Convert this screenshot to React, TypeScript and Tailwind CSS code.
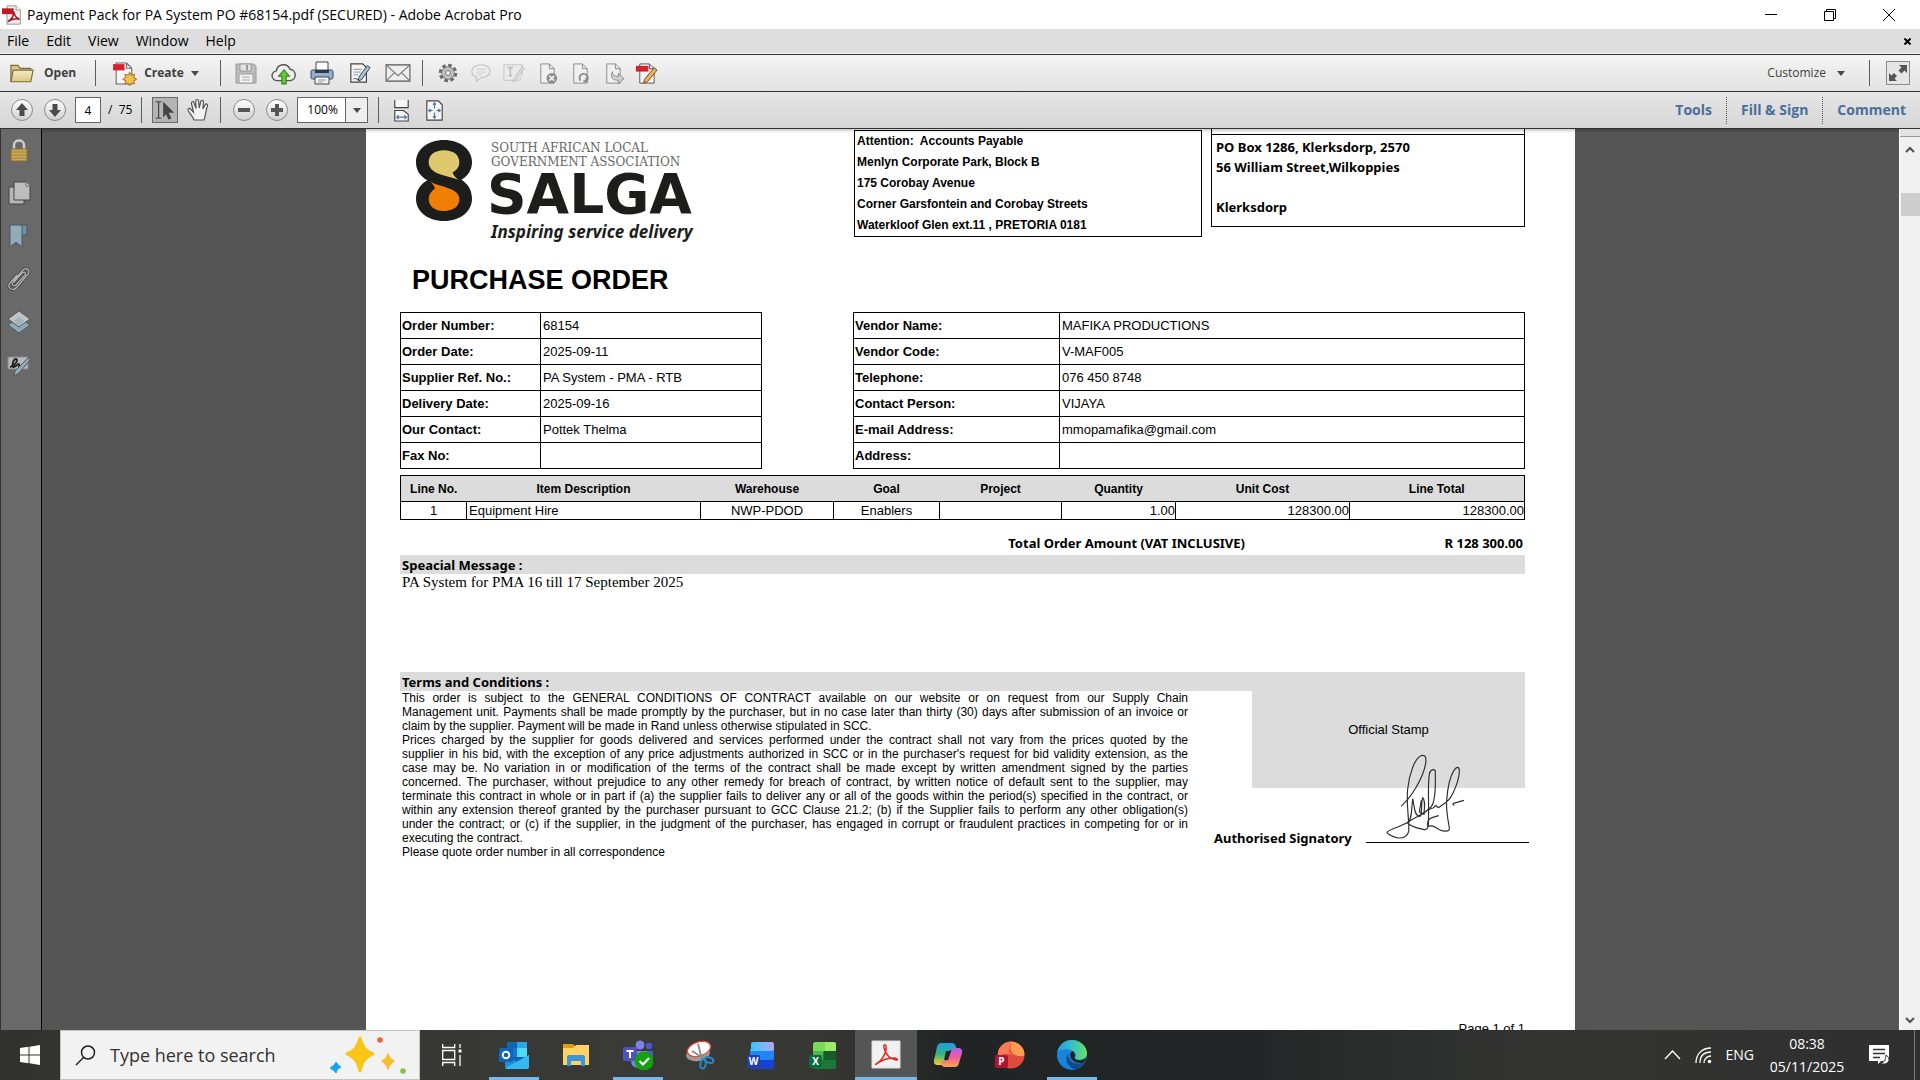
import type { ReactNode } from "react";

const orderRows = [
  ["Order Number:", "68154"],
  ["Order Date:", "2025-09-11"],
  ["Supplier Ref. No.:", "PA System - PMA - RTB"],
  ["Delivery Date:", "2025-09-16"],
  ["Our Contact:", "Pottek Thelma"],
  ["Fax No:", ""],
];

const vendorRows = [
  ["Vendor Name:", "MAFIKA PRODUCTIONS"],
  ["Vendor Code:", "V-MAF005"],
  ["Telephone:", "076 450 8748"],
  ["Contact Person:", "VIJAYA"],
  ["E-mail Address:", "mmopamafika@gmail.com"],
  ["Address:", ""],
];

const terms = [
  [
    "This order is subject to the GENERAL CONDITIONS OF CONTRACT available on our website or on request from our Supply Chain",
    "Management unit. Payments shall be made promptly by the purchaser, but in no case later than thirty (30) days after submission of an invoice or",
    "claim by the supplier. Payment will be made in Rand unless otherwise stipulated in SCC.",
  ],
  [
    "Prices charged by the supplier for goods delivered and services performed under the contract shall not vary from the prices quoted by the",
    "supplier in his bid, with the exception of any price adjustments authorized in SCC or in the purchaser's request for bid validity extension, as the",
    "case may be. No variation in or modification of the terms of the contract shall be made except by written amendment signed by the parties",
    "concerned. The purchaser, without prejudice to any other remedy for breach of contract, by written notice of default sent to the supplier, may",
    "terminate this contract in whole or in part if (a) the supplier fails to deliver any or all of the goods within the period(s) specified in the contract, or",
    "within any extension thereof granted by the purchaser pursuant to GCC Clause 21.2; (b) if the Supplier fails to perform any other obligation(s)",
    "under the contract; or (c) if the supplier, in the judgment of the purchaser, has engaged in corrupt or fraudulent practices in competing for or in",
    "executing the contract.",
  ],
  ["Please quote order number in all correspondence"],
];

const page = "M5 2h9l5 5v15H5z";

function Icon({ children, size = 24, label }: { children: ReactNode; size?: number; label?: string }) {
  return (
    <svg width={size} height={size} viewBox="0 0 24 24" fill="none" aria-label={label} className="shrink-0">
      {children}
    </svg>
  );
}

function ToolButton({ label, wide, children }: { label: string; wide?: boolean; children: ReactNode }) {
  return (
    <button
      aria-label={label}
      className={`flex h-8 shrink-0 items-center justify-center ${wide ? "w-[38px]" : "w-[33px]"}`}
    >
      {children}
    </button>
  );
}

function Divider() {
  return <div className="h-[26px] w-px shrink-0 bg-[#5c5c5c]" />;
}

function DownArrow() {
  return (
    <svg width="8" height="5" viewBox="0 0 8 5" className="shrink-0">
      <path d="M0 0h8L4 5z" fill="#4a4a4a" />
    </svg>
  );
}

function RoundArrow({ children }: { children: ReactNode }) {
  return (
    <Icon>
      <circle cx="12" cy="12" r="10.5" fill="url(#round)" stroke="#8b8b8b" />
      {children}
    </Icon>
  );
}

function TitleBar() {
  return (
    <header className="flex h-[29px] shrink-0 items-center bg-white pl-[2px] text-sm text-black">
      <Icon size={20}>
        <path d="M6 1h11l5 5v17H6z" fill="#eee" stroke="#888" />
        <path d="M17 1v5h5" fill="#fff" stroke="#888" />
        <path d="M0 4h14v7H0z" fill="#c11a24" />
        <path d="M7 20c5-3 7-7 7-12 1 5 3 8 7 9-5-1-10 0-14 3z" stroke="#a3131c" strokeWidth="1.8" />
      </Icon>
      <h1 className="ml-[5px]">Payment Pack for PA System PO #68154.pdf (SECURED) - Adobe Acrobat Pro</h1>
      <div className="ml-auto flex h-full">
        <button aria-label="Minimize" className="flex w-[59px] items-center justify-center">
          <svg width="12" height="12"><path d="M0 5.5h12" stroke="#000" /></svg>
        </button>
        <button aria-label="Restore" className="flex w-[59px] items-center justify-center">
          <svg width="12" height="12" fill="none" stroke="#000"><path d="M.5 2.5h9v9h-9zM2.5 2.500V.5h9v9h-2" /></svg>
        </button>
        <button aria-label="Close" className="flex w-[59px] items-center justify-center">
          <svg width="12" height="12" stroke="#000"><path d="M0 0l12 12M12 0L0 12" /></svg>
        </button>
        <span className="w-[2px]" />
      </div>
    </header>
  );
}

function MenuBar() {
  return (
    <nav className="flex h-[25px] shrink-0 items-center gap-[17px] border-b border-[#f5f5f5] bg-[#dedede] pl-[7px] text-sm text-black">
      <button>File</button>
      <button>Edit</button>
      <button>View</button>
      <button>Window</button>
      <button>Help</button>
      <button aria-label="Close document" className="mr-[9px] ml-auto">
        <svg width="7" height="7" stroke="#000" strokeWidth="2"><path d="M.5.5l6 6M6.500.5l-6 6" /></svg>
      </button>
    </nav>
  );
}

function FileToolbar() {
  return (
    <div className="flex h-[38px] shrink-0 items-center border-t border-b border-[#333] bg-gradient-to-b from-[#f4f4f4] to-[#e3e3e3] text-xs font-bold text-[#3f3f3f]">
      <button className="ml-2 flex items-center gap-2">
        <Icon size={28}>
          <path d="M2.500 19.500v-14h6l2 2.500h9v3" fill="#d9c588" stroke="#7c6b3c" />
          <path d="M2.500 19.500l2-10h17l-2 10z" fill="url(#folder)" stroke="#7c6b3c" />
        </Icon>
        Open
      </button>
      <div className="ml-[19px]"><Divider /></div>
      <button className="ml-4 flex items-center gap-[7px]">
        <Icon size={25}>
          <path d="M4 2h10l5 5v15H4z" fill="#f5f5f5" stroke="#666" />
          <path d="M14 2v5h5" stroke="#666" />
          <path d="M1 3h11v6H1z" fill="#d3232c" />
          <path d="M17 11l1.600 2.500 2.900-.6-.6 2.900L23.400 17.500l-2.500 1.600.6 2.900-2.900-.6L17 23.500l-1.600-2.300-2.900.6.6-2.900-2.500-1.500 2.500-1.700-.6-2.900 2.900.6z" fill="#f1c04b" stroke="#a7772a" />
        </Icon>
        Create
        <DownArrow />
      </button>
      <div className="ml-[21px]"><Divider /></div>
      <div className="ml-[6px] flex">
        <ToolButton wide label="Save">
          <Icon>
            <path d="M2 3h18l2 2v17H2z" fill="#bdbdbd" stroke="#999" />
            <path d="M6 3h11v7H6z" fill="#e4e4e4" stroke="#999" />
            <path d="M13 4v5" stroke="#999" strokeWidth="2" />
            <path d="M5 13h14v9H5z" fill="#f1f1f1" stroke="#999" />
            <path d="M8 16h8M8 19h8" stroke="#aaa" />
          </Icon>
        </ToolButton>
        <ToolButton wide label="Upload">
          <Icon size={26}>
            <path d="M6 19a4.500 4.500 0 01-1-9 6.500 6.500 0 0112.500-1.500A5.300 5.300 0 0118 19z" fill="#eee" stroke="#555" strokeWidth="1.300" />
            <path d="M12 9l5 6h-3v7h-4v-7H7z" fill="#6fc23c" stroke="#2f8116" />
          </Icon>
        </ToolButton>
        <ToolButton wide label="Print">
          <Icon>
            <path d="M6 1h12v9H6z" fill="#fff" stroke="#444" />
            <rect x="1" y="9" width="22" height="9" rx="1.500" fill="#8fb0cf" stroke="#3e4a57" />
            <path d="M5 9h14v3H5z" fill="#2f3a47" />
            <path d="M5 16h14v7H5z" fill="#f4f4f4" stroke="#444" />
            <path d="M8 19h8M8 21h5" stroke="#999" />
          </Icon>
        </ToolButton>
        <ToolButton wide label="Sign document">
          <Icon size={22}>
            <path d="M2 2h13l4 4v16H2z" fill="#f6f6f6" stroke="#444" strokeWidth="1.300" />
            <path d="M5 8h9M5 11h8M5 14h5" stroke="#888" />
            <path d="M20 4l3 2-9 13-4 2 1-5z" fill="#a9c2d8" stroke="#2c3e50" />
            <path d="M5 19c2-3 3 1 6 0" stroke="#222" />
          </Icon>
        </ToolButton>
        <ToolButton wide label="E-mail">
          <Icon size={26}>
            <path d="M1 4.500h22v15H1z" fill="#eee" stroke="#555" />
            <path d="M1 4.500l11 10 11-10M1 19.500l8-8M23 19.500l-8-8" stroke="#777" />
          </Icon>
        </ToolButton>
      </div>
      <div className="ml-[5px]"><Divider /></div>
      <div className="ml-[9px] flex">
        <ToolButton label="Settings">
          <Icon size={20}>
            <circle cx="12" cy="12" r="9.300" stroke="#6b6b6b" strokeWidth="3.600" strokeDasharray="4.300 3" />
            <circle cx="12" cy="12" r="6.500" fill="#d0d0d0" stroke="#6b6b6b" strokeWidth="3" />
            <circle cx="12" cy="12" r="6" stroke="#bdbdbd" strokeWidth="2.500" />
            <circle cx="12" cy="12" r="3" fill="#eee" stroke="#5c5c5c" />
          </Icon>
        </ToolButton>
        <ToolButton label="Comment bubble">
          <Icon size={22}>
            <path d="M12 3c5.500 0 10 3 10 7s-4.500 7-10 7l-5 4v-4.500C4 15.500 2 13 2 10c0-4 4.500-7 10-7z" fill="#ededed" stroke="#c4c4c4" strokeWidth="1.300" />
            <path d="M7 8h10M7 11h10M7 14h6" stroke="#ccc" />
          </Icon>
        </ToolButton>
        <ToolButton label="Edit text">
          <Icon size={22}>
            <path d="M1 3h20v12l-3 5H1z" fill="#ebebeb" stroke="#c4c4c4" />
            <path d="M5 6h6M8 6v9M6 15h4" stroke="#bbb" strokeWidth="1.500" />
            <path d="M21 5l2 2-9 13-3 2 1-4z" fill="#ddd" stroke="#bbb" />
          </Icon>
        </ToolButton>
        <ToolButton label="Delete page">
          <Icon size={23}>
            <path d={page} fill="#f0f0f0" stroke="#8a8a8a" />
            <path d="M14 2v5h5" stroke="#8a8a8a" />
            <circle cx="16.500" cy="17" r="5.500" fill="#8b8b8b" />
            <path d="M14 14.500l5 5M19 14.500l-5 5" stroke="#eee" strokeWidth="1.800" />
          </Icon>
        </ToolButton>
        <ToolButton label="Rotate page">
          <Icon size={23}>
            <path d={page} fill="#f0f0f0" stroke="#8a8a8a" />
            <path d="M14 2v5h5" stroke="#8a8a8a" />
            <path d="M12 19.500a4.300 4.300 0 116 .5v-3.500M18 20h-3" stroke="#8a8a8a" strokeWidth="2" />
          </Icon>
        </ToolButton>
        <ToolButton label="Extract page">
          <Icon size={23}>
            <path d={page} fill="#f0f0f0" stroke="#8a8a8a" />
            <path d="M14 2v5h5" stroke="#8a8a8a" />
            <path d="M11 10c0 4 2 5 6 5v-3l6 5.500-6 5V19c-6 0-9-3-6-9z" fill="#cfcfcf" stroke="#8a8a8a" />
          </Icon>
        </ToolButton>
        <ToolButton label="Edit PDF">
          <Icon size={23}>
            <path d="M5 2h10l5 5v15H5z" fill="#f6f6f6" stroke="#555" />
            <path d="M15 2v5h5" stroke="#555" />
            <path d="M1 4h13v6H1z" fill="#d3232c" />
            <path d="M20 6l3 2.500-10 12-4 1.500 1-4z" fill="#eeb15c" stroke="#6b4a1d" />
          </Icon>
        </ToolButton>
      </div>
      <button className="mr-6 ml-auto flex items-center gap-[11px] font-normal">
        Customize
        <DownArrow />
      </button>
      <Divider />
      <button aria-label="Read mode" className="mr-[10px] ml-4 flex size-6 items-center justify-center border border-[#8a8a8a] bg-[#e6e6e6]">
        <svg width="20" height="20" viewBox="0 0 20 20" fill="#555">
          <path d="M11 2h8v8l-2.500-2.500-3 3-3-3 3-3zM1 18v-8l2.500 2.500 2.500-2.500 3 3-2.500 2.500L9 18z" />
        </svg>
      </button>
    </div>
  );
}

function PageToolbar() {
  return (
    <div className="flex h-[37px] shrink-0 items-center border-b border-[#333] bg-gradient-to-b from-[#e6e6e6] to-[#d6d6d6] text-xs text-black">
      <div className="ml-[5px] flex">
        <ToolButton label="Previous page">
          <RoundArrow><path d="M12 5l6 7h-3.500v6h-5v-6H6z" fill="#4b4b4b" /></RoundArrow>
        </ToolButton>
        <ToolButton label="Next page">
          <RoundArrow><path d="M12 19l6-7h-3.500V6h-5v6H6z" fill="#4b4b4b" /></RoundArrow>
        </ToolButton>
      </div>
      <label className="ml-1 flex items-center gap-[7px]">
        <input
          aria-label="Page number"
          defaultValue="4"
          className="h-[26px] w-[26px] border border-[#666] bg-white text-center"
        />
        <span>/&nbsp; 75</span>
      </label>
      <div className="ml-[9px]"><Divider /></div>
      <button aria-label="Select tool" className="ml-[10px] flex size-[26px] items-center justify-center border border-[#6a6a6a] bg-[#b4b4b4]">
        <Icon size={22}>
          <path d="M2 3h2l1 1 1-1h2M5 4v16M2 21h2l1-1 1 1h2" stroke="#444" strokeWidth="1.300" />
          <path d="M10 3l12 12h-6l3 6-3 1.500-3-6-3 4z" fill="#444" />
        </Icon>
      </button>
      <button aria-label="Hand tool" className="ml-2">
        <Icon>
          <path d="M8 22c-1-4-6-8-6-10s2-2 3-.5L7.500 14 5.500 5.500c-.4-2 1.900-2.400 2.500-.8L10 10.500 9.800 3c0-2 2.700-2 2.800 0l.6 7 1.600-6.500c.5-1.900 3-1.300 2.700.5L16.800 11l2.300-4.200c1-1.600 3-.6 2.300 1C20 12 19.500 18 18 22z" fill="#f3f3f3" stroke="#555" strokeWidth="1.200" />
        </Icon>
      </button>
      <div className="ml-[10px]"><Divider /></div>
      <div className="ml-[6px] flex">
        <ToolButton label="Zoom out">
          <RoundArrow><path d="M6 10h12v4H6z" fill="#555" /></RoundArrow>
        </ToolButton>
        <ToolButton label="Zoom in">
          <RoundArrow><path d="M6 10h4V6h4v4h4v4h-4v4h-4v-4H6z" fill="#555" /></RoundArrow>
        </ToolButton>
      </div>
      <div className="relative ml-1 h-[26px] w-[71px] border border-[#666] bg-white">
        <select aria-label="Zoom level" className="h-full w-full appearance-none pl-[9px] text-xs">
          <option>100%</option>
        </select>
        <div className="pointer-events-none absolute inset-y-0 right-0 flex w-[22px] items-center justify-center border-l border-[#666] bg-[#eee]">
          <DownArrow />
        </div>
      </div>
      <div className="ml-[10px]"><Divider /></div>
      <div className="ml-[6px] flex">
        <ToolButton label="Fit width">
          <Icon size={23}>
            <path d="M5 1v8h14V1M5 23V12h9l5 4v7z" fill="#f6f6f6" stroke="#444" strokeWidth="1.200" />
            <path d="M7 19h10M9 17l-2 2 2 2M15 17l2 2-2 2" stroke="#5472b5" strokeWidth="1.300" />
          </Icon>
        </ToolButton>
        <ToolButton label="Fit page">
          <Icon size={23}>
            <path d="M4 2h12l4 4v16H4z" fill="#f6f6f6" stroke="#444" strokeWidth="1.200" />
            <path d="M12 4v6M12 14v6M6 12h4M14 12h4M10.500 6L12 4l1.500 2M10.500 18l1.500 2 1.500-2M8 10.500L6 12l2 1.500M16 10.500l2 1.500-2 1.500" stroke="#5472b5" strokeWidth="1.300" />
          </Icon>
        </ToolButton>
      </div>
      <div className="ml-auto flex h-[27px] items-center divide-x divide-dotted divide-[#555] text-sm font-bold text-[#4a6e9c]">
        <button className="h-full px-[14px]">Tools</button>
        <button className="h-full px-[14px]">Fill &amp; Sign</button>
        <button className="h-full px-[14px]">Comment</button>
      </div>
    </div>
  );
}

function Sidebar() {
  return (
    <aside className="flex w-[42px] shrink-0 flex-col gap-[19px] border-r border-l border-r-black border-l-[#333] bg-[#696969] pt-[9px] pl-[6px]">
      <button aria-label="Security">
        <Icon>
          <path d="M7 12V7c0-6 10-6 10 0v5" stroke="#ccc" strokeWidth="2.500" />
          <path d="M4 11h16v12H4z" fill="#c9a95c" stroke="#8b6b2c" />
          <path d="M4 14h16M4 17h16M4 20h16" stroke="#a3843f" />
        </Icon>
      </button>
      <button aria-label="Page thumbnails">
        <Icon>
          <path d="M2 6h15v17H2z" fill="#b5b5b5" stroke="#444" />
          <path d="M7 1h12l4 4v14H7z" fill="#bdbdbd" stroke="#444" />
          <path d="M19 1v4h4" stroke="#666" fill="#ddd" />
        </Icon>
      </button>
      <button aria-label="Bookmarks">
        <Icon>
          <path d="M13 1h7v10h-7z" fill="#6f8ea3" stroke="#4a5a66" />
          <path d="M3 1h12v22l-6-5-6 5z" fill="#93aab9" stroke="#4a5a66" />
        </Icon>
      </button>
      <button aria-label="Attachments">
        <Icon>
          <path d="M7 15l8-9c3-2 4 0 3 2l-9 10c-2 2-5 0-3-3L16 3c3-3 8 0 5 4L10 20c-4 5-11 1-7-4l7-8" stroke="#3f3f3f" strokeWidth="2.800" />
          <path d="M7 15l8-9c3-2 4 0 3 2l-9 10c-2 2-5 0-3-3L16 3c3-3 8 0 5 4L10 20c-4 5-11 1-7-4l7-8" stroke="#b5b5b5" strokeWidth="1.300" />
        </Icon>
      </button>
      <button aria-label="Layers">
        <Icon>
          <path d="M1 15l11-8 11 8-11 8z" fill="#8fa9bb" stroke="#4e5a62" />
          <path d="M1 9l11-8 11 8-11 8z" fill="#c3c3c3" stroke="#555" />
          <path d="M6.500 11L12 7l5.500 4-5.500 5z" fill="#a0b4c0" />
        </Icon>
      </button>
      <button aria-label="Signatures">
        <Icon>
          <path d="M1 4h20v12H1z" fill="#b9b9b9" stroke="#888" />
          <path d="M3 14c5-1 9-8 6-8s-5 9-2 8 4-4 5-3-2 4 2 2" stroke="#222" strokeWidth="1.800" />
          <path d="M21 5l2.500 1.500L12 20l-5 3 1-5z" fill="#93a9bb" stroke="#4e5a62" />
        </Icon>
      </button>
    </aside>
  );
}

function Logo() {
  return (
    <div className="flex pt-[11px] pl-4 text-[#1d1d1b]">
      <svg width="56" height="81" viewBox="168 44 168 244" preserveAspectRatio="none" className="shrink-0">
        <path d="M252 44c50 0 84 30 84 66 0 24-12 42-32 54 20 12 32 32 32 57 0 38-34 67-84 67s-84-29-84-67c0-24 12-43 34-56-22-12-34-31-34-55 0-36 34-66 84-66z" fill="#1d1d1b" />
        <path d="M252 75c29 0 46 15 46 36 0 14-8 24-20 31 2 8 8 15 17 22-18-8-36-10-53-16-22-7-36-20-36-37 0-21 17-36 46-36z" fill="#dfc76b" />
        <path d="M211 170c16 10 36 12 54 19 22 8 33 17 33 33 0 22-17 36-46 36s-46-15-46-37c0-12 7-22 19-31-2-7-7-14-14-20z" fill="#f07e05" />
      </svg>
      <div className="ml-[17px]">
        <p className="ml-[2px] pt-px font-['DejaVu_Serif',serif] text-xs leading-[14px] text-[#666]">
          SOUTH AFRICAN LOCAL
          <br />
          GOVERNMENT ASSOCIATION
        </p>
        <p className="-ml-[2px] font-['DejaVu_Sans',sans-serif] text-[55px] leading-[50px] font-bold">SALGA</p>
        <p className="ml-[2px] font-['Noto_Sans',sans-serif] text-[17px] leading-[25px] font-bold italic">Inspiring service delivery</p>
      </div>
    </div>
  );
}

function DetailTable({ rows, narrow }: { rows: string[][]; narrow?: boolean }) {
  return (
    <table className={`border-collapse text-left text-[13px] leading-4 ${narrow ? "w-[362px]" : "w-[672px]"}`}>
      <tbody>
        {rows.map(([label, value]) => (
          <tr key={label} className="h-[26px]">
            <th scope="row" className={`border border-black px-px ${narrow ? "w-[140px]" : "w-[206px]"}`}>
              {label}
            </th>
            <td className="border border-black px-[2px]">{value}</td>
          </tr>
        ))}
      </tbody>
    </table>
  );
}

function ItemTable() {
  return (
    <table className="mt-[6px] w-full table-fixed border-collapse border border-black text-[13px] leading-4">
      <colgroup>
        <col className="w-[66px]" />
        <col className="w-[234px]" />
        <col className="w-[133px]" />
        <col className="w-[106px]" />
        <col className="w-[122px]" />
        <col className="w-[114px]" />
        <col className="w-[174px]" />
        <col />
      </colgroup>
      <thead>
        <tr className="h-[26px] border-b border-black bg-[#dcdcdc] text-xs">
          <th>Line No.</th>
          <th>Item Description</th>
          <th>Warehouse</th>
          <th>Goal</th>
          <th>Project</th>
          <th>Quantity</th>
          <th>Unit Cost</th>
          <th>Line Total</th>
        </tr>
      </thead>
      <tbody>
        <tr className="h-[18px] divide-x divide-black text-center">
          <td>1</td>
          <td className="pl-[2px] text-left">Equipment Hire</td>
          <td>NWP-PDOD</td>
          <td>Enablers</td>
          <td></td>
          <td className="text-right">1.00</td>
          <td className="text-right">128300.00</td>
          <td className="text-right">128300.00</td>
        </tr>
      </tbody>
    </table>
  );
}

function Signature() {
  return (
    <svg width="82" height="88" viewBox="585 280 246 264" fill="none" stroke="#2e2e2e" strokeWidth="3.500" strokeLinejoin="round" className="absolute top-[62px] right-[58px]">
      <path d="M633 440c28-24 66-82 74-128 3-20-2-28-14-24-20 8-36 60-40 100-5 50 6 96 3 128-3 14-18 20-30 19-12 0-34-12-35-17 0-6 40-16 64-32 30-18 48-22 68-44 18-20 12-90 13-108-2-6-16-6-18 10-6 40 0 90-3 150-1 12-4 18-16 15-16-4-34-6-44-18" />
      <path d="M652 492c14-10 12-42 16-74 6 16 2 48 20 52 10 2 4-38 10-56 8 6 6 24 4 50l-14-8 6-34M712 450c12-4 18 0 24-12 4 0 6 4 10 6 10-8 24-14 34-28 14-20 28-60 28-82 0-14-8-14-16-2-12 18-20 60-22 92-2 30 4 58 8 80 2 14-16 12-30 6-14-8-18-14-34-10-4-10 0-22 12-26l20-6M788 432l34-10M788 432l4 6" />
    </svg>
  );
}

function PurchaseOrder() {
  return (
    <main className="w-[1209px] shrink-0 bg-white pr-[50px] pl-[34px] font-['Liberation_Sans',Arial,sans-serif] text-black">
      <div className="flex items-start">
        <div className="w-[454px]"><Logo /></div>
        <address className="mt-px w-[348px] border border-black pl-[2px] text-xs leading-[21px] font-bold not-italic">
          <p>Attention:&nbsp; Accounts Payable</p>
          <p>Menlyn Corporate Park, Block B</p>
          <p>175 Corobay Avenue</p>
          <p>Corner Garsfontein and Corobay Streets</p>
          <p>Waterkloof Glen ext.11 , PRETORIA 0181</p>
        </address>
        <address className="ml-[9px] flex-1 border-x border-b border-black font-['Noto_Sans',sans-serif] text-[13px] leading-5 font-bold not-italic">
          <div className="h-[6px] border-b border-black" />
          <div className="h-[91px] pt-[2px] pl-1">
            <p>PO Box 1286, Klerksdorp, 2570</p>
            <p>56 William Street,Wilkoppies</p>
            <p className="mt-5">Klerksdorp</p>
          </div>
        </address>
      </div>
      <h2 className="mt-5 ml-3 text-[27px] leading-8 font-bold">PURCHASE ORDER</h2>
      <div className="mt-4 flex justify-between">
        <DetailTable rows={orderRows} narrow />
        <DetailTable rows={vendorRows} />
      </div>
      <ItemTable />
      <div className="mt-[11px] flex h-6 items-center justify-end pr-[2px] pb-px font-['Noto_Sans',sans-serif] text-[13px] leading-4 font-bold">
        <span>Total Order Amount (VAT INCLUSIVE)</span>
        <span className="w-[278px] text-right">R 128 300.00</span>
      </div>
      <h3 className="h-[19px] bg-[#dcdcdc] pl-[2px] font-['Noto_Sans',sans-serif] text-[13px] leading-5 font-bold">Speacial Message :</h3>
      <p className="pl-[2px] font-['Liberation_Serif','Times_New_Roman',serif] text-[15px] leading-4">
        PA System for PMA 16 till 17 September 2025
      </p>
      <h3 className="mt-[82px] h-[19px] bg-[#dcdcdc] pl-[2px] font-['Noto_Sans',sans-serif] text-[13px] leading-5 font-bold">
        Terms and Conditions :
      </h3>
      <div className="flex">
        <div className="ml-[2px] w-[786px] text-xs leading-[14px] whitespace-nowrap">
          {terms.map((lines) => (
            <p key={lines[0]}>
              {lines.map((line, i) => (
                <span key={line} className={i < lines.length - 1 ? "block [text-align-last:justify]" : "block"}>
                  {line}
                </span>
              ))}
            </p>
          ))}
        </div>
        <div className="relative ml-auto w-[311px]">
          <div className="ml-auto flex h-[97px] w-[273px] items-center justify-center bg-[#dcdcdc] pb-[19px] text-[13px]">
            Official Stamp
          </div>
          <Signature />
          <div className="mt-10 -mr-1 flex justify-between font-['Noto_Sans',sans-serif] text-[13px] leading-5 font-bold">
            <span>Authorised Signatory</span>
            <span className="h-[15px] w-[163px] border-b border-black" />
          </div>
        </div>
      </div>
      <p className="mt-[162px] text-right text-[13px] leading-4">Page 1 of 1</p>
    </main>
  );
}

function ScrollBar() {
  return (
    <div className="flex w-[21px] shrink-0 flex-col items-center border-l border-white bg-[#f0f0f0]">
      <div className="h-2 w-full border-b border-[#999] bg-[#e2e2e2]" />
      <button aria-label="Scroll up" className="mt-1 flex h-4 items-center">
        <svg width="10" height="7" fill="none" stroke="#505050" strokeWidth="2"><path d="M1 6l4-4 4 4" /></svg>
      </button>
      <div className="mt-9 h-[23px] w-[19px] bg-[#cdcdcd]" />
      <button aria-label="Scroll down" className="mt-auto mb-[2px] flex h-4 items-center">
        <svg width="10" height="7" fill="none" stroke="#505050" strokeWidth="2"><path d="M1 1l4 4 4-4" /></svg>
      </button>
    </div>
  );
}

function TaskButton({ label, children, open, active }: { label: string; children: ReactNode; open?: boolean; active?: boolean }) {
  return (
    <button
      aria-label={label}
      className={`relative flex h-full w-[62px] items-center justify-center ${active ? "bg-[#555]" : ""}`}
    >
      {children}
      {(open || active) && (
        <span className={`absolute bottom-0 h-[3px] bg-[#76b9ed] ${active ? "inset-x-0" : "inset-x-[6px]"}`} />
      )}
    </button>
  );
}

function Badge({ letter, fill }: { letter: string; fill: string }) {
  return (
    <>
      <rect x="0" y="15" width="13" height="13" rx="2" fill={fill} />
      <text x="6.500" y="25" textAnchor="middle" fill="#fff" className="font-['Open_Sans'] text-[10px] font-bold">
        {letter}
      </text>
    </>
  );
}

function AppIcon({ children }: { children: ReactNode }) {
  return (
    <svg width="30" height="30" viewBox="0 0 30 30" fill="none">
      {children}
    </svg>
  );
}

function Taskbar() {
  return (
    <footer className="flex h-[50px] shrink-0 items-center bg-[linear-gradient(90deg,#323331_0%,#3a3a36_35%,#363632_43%,#212424_50%,#232626_65%,#343533_80%,#2e2f2e_100%)] text-white">
      <button aria-label="Start" className="flex h-full w-[60px] items-center justify-center">
        <svg width="20" height="20" viewBox="0 0 20 20" fill="#fff">
          <path d="M0 3l8.500-1.200v7.700H0zM9.500 1.700L20 0v9.500H9.500zM0 10.500h8.500v7.700L0 17zM9.500 10.500H20V20L9.500 18.300z" />
        </svg>
      </button>
      <label className="flex h-full w-[360px] items-center border border-[#c4c4c4] bg-[#f2f2f2] pl-[14px]">
        <svg width="21" height="21" viewBox="0 0 21 21" fill="none" stroke="#222" strokeWidth="1.500" className="shrink-0">
          <circle cx="13" cy="7.500" r="6.500" />
          <path d="M8.500 12.500L1 20" />
        </svg>
        <input
          aria-label="Search"
          placeholder="Type here to search"
          className="ml-[14px] min-w-0 flex-1 text-lg text-[#333] placeholder:text-[#333]"
        />
        <svg width="76" height="38" viewBox="0 0 76 38" className="mr-[13px] shrink-0">
          <path d="M30 2c3 10 6 13 13 16-8 4-10 6-13 17-3-11-5-13-13-17 7-3 10-6 13-16z" fill="#fbc618" stroke="#fbc618" strokeWidth="3" strokeLinejoin="round" />
          <path d="M58 18c1 4 3 6 6 7-3 2-5 4-6 8-1-4-3-6-6-8 3-1 5-3 6-7z" fill="#f9bd2c" stroke="#f9bd2c" strokeWidth="1.500" strokeLinejoin="round" />
          <path d="M6 27c1 2 2 3 4 4-3 1-4 2-4 5-1-2-2-3-5-4 3-1 4-2 5-5z" fill="#12a5f4" stroke="#12a5f4" strokeWidth="2" strokeLinejoin="round" />
          <circle cx="50" cy="4" r="2.800" fill="#ea6437" />
          <circle cx="73" cy="35" r="2.800" fill="#85c440" />
        </svg>
      </label>
      <div className="ml-px flex h-full">
        <TaskButton label="Task View">
          <svg width="20" height="22" viewBox="0 0 20 22" fill="none" stroke="#fff" strokeWidth="1.300">
            <path d="M.7 0v3.500h12V0M.7 6.500h12v9H.700zM.7 22v-3.500h12V22M18 0v4M18 11v11" />
            <path d="M16.500 5.500h3v3h-3z" fill="#fff" stroke="none" />
          </svg>
        </TaskButton>
        <TaskButton label="Outlook" open>
          <AppIcon>
            <path d="M8 2h20v24H8z" fill="#1066b5" />
            <path d="M8 8h10v9H8z" fill="#0f78d4" /><path d="M18 8h10v9H18z" fill="#50d9ff" /><path d="M18 2h10v6H18z" fill="#28a8ea" />
            <path d="M6 15l12 7 12-7v12a2 2 0 01-2 2H8a2 2 0 01-2-2z" fill="#1b8fdf" />
            <path d="M6 28l24-13v12a2 2 0 01-2 2H8z" fill="#35b8f1" />
            <rect x="0" y="8" width="14" height="14" rx="1.500" fill="#0f64b8" />
            <circle cx="7" cy="15" r="3.300" stroke="#fff" strokeWidth="2" />
          </AppIcon>
        </TaskButton>
        <TaskButton label="File Explorer">
          <AppIcon>
            <path d="M2 4h10l3 3v5H2z" fill="#e09d10" />
            <path d="M2 8h10l3-3h13v20H2z" fill="#fed363" />
            <path d="M6 26V17q0-2 2-2h14q2 0 2 2v9h-4v-5H10v5z" fill="#3b95d8" />
          </AppIcon>
        </TaskButton>
        <TaskButton label="Teams" open>
          <AppIcon>
            <circle cx="17" cy="5" r="4.500" fill="#7b83eb" /><circle cx="26" cy="6" r="3.200" fill="#5059c9" />
            <path d="M20 11h10v8q0 6-6 6h-4z" fill="#5059c9" />
            <path d="M8 11h16v10q0 7-8 7t-8-7z" fill="#7b83eb" />
            <rect x="0" y="7" width="14" height="14" rx="1.500" fill="#4b53bc" />
            <path d="M3.500 11h7M7 11v7" stroke="#fff" strokeWidth="2" />
            <circle cx="21" cy="21" r="9.500" fill="#13a10e" />
            <path d="M16.500 21l3.500 3.500 6-6.500" stroke="#fff" strokeWidth="2.200" />
          </AppIcon>
        </TaskButton>
        <TaskButton label="Snipping Tool">
          <AppIcon>
            <ellipse cx="13" cy="14" rx="12" ry="7" transform="rotate(-10 13 14)" fill="#9b9b9b" />
            <ellipse cx="14" cy="9" rx="12" ry="7" transform="rotate(-18 14 9)" fill="#fff" stroke="#e04b40" strokeWidth="1.300" />
            <path d="M13 4l4 15M7 11l11 7" stroke="#888" strokeWidth="1.800" />
            <ellipse cx="18" cy="24" rx="2.600" ry="4.500" transform="rotate(10 18 24)" stroke="#2487c7" strokeWidth="2" />
            <ellipse cx="24" cy="20" rx="4.500" ry="2.600" transform="rotate(20 24 20)" stroke="#2487c7" strokeWidth="2" />
          </AppIcon>
        </TaskButton>
        <TaskButton label="Word">
          <AppIcon>
            <rect x="3" y="10" width="24" height="19" rx="2.500" fill="#1743d1" />
            <rect x="3" y="8" width="24" height="12" rx="2.500" fill="#1f86f3" />
            <path d="M4 4q0-2 3-2h18q2 0 2 3v4q0 2-3 2H4z" fill="url(#word)" />
            <Badge letter="W" fill="#1d3fa8" />
          </AppIcon>
        </TaskButton>
        <TaskButton label="Excel">
          <AppIcon>
            <rect x="4" y="2" width="23" height="27" rx="2.500" fill="#1a7a35" />
            <path d="M4 5q0-3 3-3h9v9q-2 0-2 3v6H4z" fill="#4ab84a" />
            <path d="M6 2h10v9H4V4z" fill="#79db5e" /><path d="M16 2h9q2 0 2 2v7H16z" fill="#9bec6a" />
            <path d="M15 11h12v9H15z" fill="#185c2c" />
            <Badge letter="X" fill="#0f6a40" />
          </AppIcon>
        </TaskButton>
        <TaskButton label="Adobe Acrobat" active>
          <AppIcon>
            <path d="M1 1h28v27H1z" fill="#f1f1f1" stroke="#ddd" />
            <path d="M5 24c6-3 11-12 10-18-.5-2.500-3-1-2 2 2 7 6 11 12 12 3 .4 1-2.500-3-2-6 .4-11 2-15 5-2 1.600-3 2-2 1z" stroke="#e02b20" strokeWidth="1.500" />
          </AppIcon>
        </TaskButton>
        <TaskButton label="Copilot">
          <AppIcon>
            <path d="M8 3h11q3 0 4 4l1 3h-5q-3 0-4 3l-3 9q-1 3-4 3H5q-5 0-4-5L4 7q1-4 4-4z" fill="url(#copilotA)" />
            <path d="M22 27H12q-3 0-4-3l-1-3h4q3 0 4-3l3-7q1-3 4-3h3q5 0 4 5l-3 10q-1 4-4 4z" fill="url(#copilotB)" />
            <path d="M13 11h5l-3 9h-4z" fill="#222525" />
          </AppIcon>
        </TaskButton>
        <TaskButton label="PowerPoint">
          <AppIcon>
            <circle cx="16" cy="15" r="13.500" fill="#df4a3b" />
            <path d="M16 1.500A13.500 13.500 0 0129.500 15q-1 2-4 1-10 0-10-8z" fill="#fb9b56" />
            <path d="M3 12Q6 2 16 1.500L14 12l6 5Q12 10 3 17z" fill="#f57c55" />
            <Badge letter="P" fill="#b01433" />
          </AppIcon>
        </TaskButton>
        <TaskButton label="Microsoft Edge" open>
          <AppIcon>
            <circle cx="15" cy="15" r="15" fill="#1883d8" />
            <path d="M0 13C2 4 8 0 15 0c9 0 15 7 15 13 0 5-4 7-8 7-3 0-4-1-4-2s2-2 0-5C15 8 4 8 0 13z" fill="url(#edge)" />
            <path d="M11 14c-4 6 0 14 8 15.500 3-1 7-4 8.500-7C20 26 11 22 11 14z" fill="#114a8b" />
            <path d="M15.500 11c3 2 3 4 2 6 0 2 2 3.500 6 3 3-.3 4.500-1 6.500-3.500l-2.500 6C20 25 13 20 13 15c0-2 1-3 2.500-4z" fill="#222525" />
          </AppIcon>
        </TaskButton>
      </div>
      <div className="ml-auto flex h-full items-center">
        <button aria-label="Show hidden icons">
          <svg width="17" height="10" fill="none" stroke="#fff" strokeWidth="1.300"><path d="M1 9l7.500-8L16 9" /></svg>
        </button>
        <button aria-label="Network" className="ml-[14px]">
          <svg width="17" height="17" viewBox="0 0 17 17" fill="none" stroke="#fff" strokeWidth="1.300">
            <path d="M1 16C1 7 7 1 16 1M5 16C5 9 9 5 16 5M9 16c0-4 3-7 7-7" />
            <circle cx="14.500" cy="14.500" r="1.800" fill="#fff" stroke="none" />
          </svg>
        </button>
        <button className="ml-[14px] text-sm">ENG</button>
        <button className="ml-[15px] flex w-[76px] flex-col items-center text-sm leading-[23px]">
          <time>08:38</time>
          <time>05/11/2025</time>
        </button>
        <button aria-label="Notifications" className="mr-[23px] ml-6">
          <svg width="22" height="21" viewBox="0 0 22 21">
            <path d="M0 0h20v16h-8l-3 3v-3H0z" fill="#fff" />
            <path d="M4 4.500h12M4 8.500h12M4 12.500h7" stroke="#333" strokeWidth="1.300" />
            <path d="M17 10q4 2 3 6-3 5-9 2 6 0 6-8z" fill="#fff" stroke="#333" />
          </svg>
        </button>
        <span className="mr-[5px] h-full w-px bg-[#777]" />
      </div>
    </footer>
  );
}

function Gradients() {
  return (
    <svg width="0" height="0" className="absolute">
      <defs>
        <linearGradient id="round" x2="0" y2="1"><stop stopColor="#fff" /><stop offset="1" stopColor="#cfcfcf" /></linearGradient>
        <linearGradient id="folder" x2="0" y2="1"><stop stopColor="#f8edc5" /><stop offset="1" stopColor="#dcc583" /></linearGradient>
        <linearGradient id="word"><stop stopColor="#35c8fb" /><stop offset="1" stopColor="#b5a5fa" /></linearGradient>
        <linearGradient id="copilotA" x2="0" y2="1"><stop stopColor="#1c9cf0" /><stop offset=".5" stopColor="#36b37e" /><stop offset="1" stopColor="#f5d327" /></linearGradient>
        <linearGradient id="copilotB" x2="0" y2="1"><stop stopColor="#b45cf0" /><stop offset=".5" stopColor="#f0609b" /><stop offset="1" stopColor="#fba44c" /></linearGradient>
        <linearGradient id="edge"><stop stopColor="#1f9fe8" /><stop offset=".5" stopColor="#35c1c8" /><stop offset="1" stopColor="#6be05a" /></linearGradient>
      </defs>
    </svg>
  );
}

export default function App() {
  return (
    <div className="flex h-screen flex-col overflow-hidden bg-white font-['Open_Sans','Segoe_UI',sans-serif]">
      <Gradients />
      <TitleBar />
      <MenuBar />
      <FileToolbar />
      <PageToolbar />
      <div className="flex min-h-0 flex-1">
        <Sidebar />
        <div className="relative flex flex-1 justify-center overflow-hidden bg-[#555]">
          <PurchaseOrder />
          <div className="absolute inset-x-0 top-0 h-1 bg-gradient-to-b from-black/20 to-transparent" />
        </div>
        <ScrollBar />
      </div>
      <Taskbar />
    </div>
  );
}
